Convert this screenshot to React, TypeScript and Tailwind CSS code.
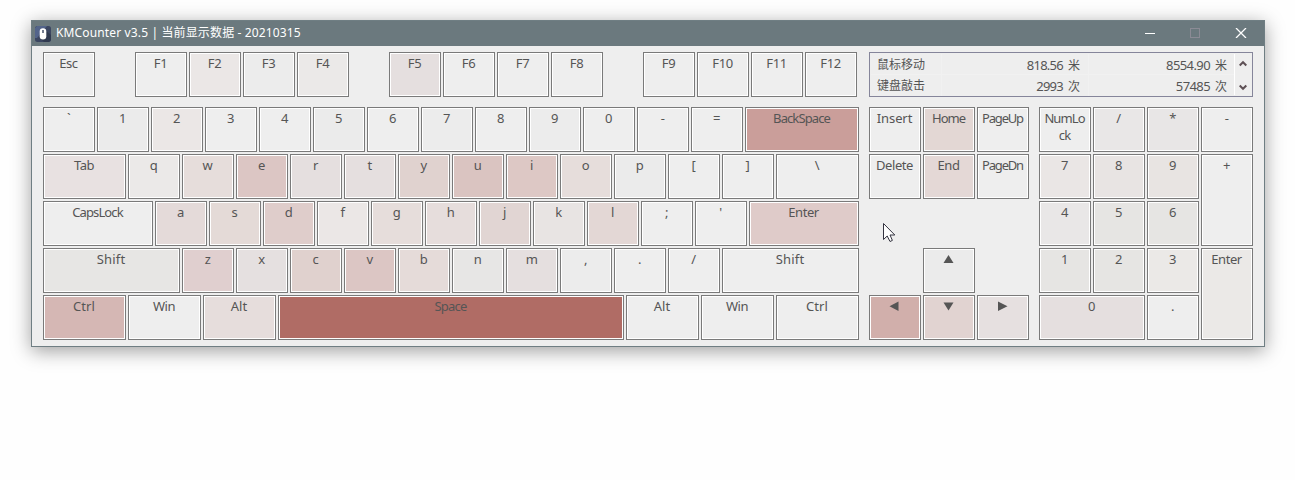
import type { ReactNode } from "react";

type KeyDef = { label: ReactNode; size?: string; fill?: string; tight?: string };

const PLAIN = "bg-[#eeeeee]";
const UNIT = "w-[52px]";

function Key({ label, size = UNIT, fill = PLAIN, tight = "" }: KeyDef) {
  return (
    <div
      className={`min-h-[45px] shrink-0 border border-[#7a7a7a] bg-white p-px ${size}`}
    >
      <div
        className={`h-full pt-px pr-[3px] pl-0.5 text-center text-[13px] leading-[17px] break-all ${fill} ${tight}`}
      >
        {label}
      </div>
    </div>
  );
}

function Row({ keys }: { keys: KeyDef[] }) {
  return (
    <div className="flex gap-0.5">
      {keys.map((k, i) => (
        <Key key={i} {...k} />
      ))}
    </div>
  );
}

function Arrow({ points }: { points: string }) {
  return (
    <svg className="mx-auto mt-[3px] block" width="11" height="11" viewBox="0 0 11 11">
      <polygon points={points} fill="#555555" />
    </svg>
  );
}

const functionGroups: KeyDef[][] = [
  [{ label: "Esc" }],
  [
    { label: "F1" },
    { label: "F2", fill: "bg-[#ebe7e6]" },
    { label: "F3", fill: "bg-[#ececec]" },
    { label: "F4", fill: "bg-[#ebe9e8]" },
  ],
  [{ label: "F5", fill: "bg-[#e5dfdf]" }, { label: "F6" }, { label: "F7" }, { label: "F8" }],
  [{ label: "F9" }, { label: "F10" }, { label: "F11" }, { label: "F12" }],
];

const mainRows: KeyDef[][] = [
  [
    { label: "`" },
    { label: "1", fill: "bg-[#ebebeb]" },
    { label: "2", fill: "bg-[#ebe7e6]" },
    { label: "3" },
    { label: "4" },
    { label: "5", fill: "bg-[#ebebeb]" },
    { label: "6" },
    { label: "7", fill: "bg-[#ececec]" },
    { label: "8" },
    { label: "9", fill: "bg-[#ececec]" },
    { label: "0" },
    { label: "-" },
    { label: "=" },
    {
      label: "BackSpace",
      size: "w-[114px]",
      fill: "bg-[#ca9e9a]",
      tight: "tracking-[-0.9px]",
    },
  ],
  [
    { label: "Tab", size: "w-[83px]", fill: "bg-[#e8e1e1]" },
    { label: "q", fill: "bg-[#ebe9e8]" },
    { label: "w", fill: "bg-[#e6dddb]" },
    { label: "e", fill: "bg-[#dcc6c4]" },
    { label: "r", fill: "bg-[#e5dfdf]" },
    { label: "t", fill: "bg-[#e5dfdf]" },
    { label: "y", fill: "bg-[#e0d2cf]" },
    { label: "u", fill: "bg-[#dac4c1]" },
    { label: "i", fill: "bg-[#ddc8c5]" },
    { label: "o", fill: "bg-[#e6dddb]" },
    { label: "p", fill: "bg-[#ebebeb]" },
    { label: "[" },
    { label: "]" },
    { label: "\\", size: "w-[83px]" },
  ],
  [
    { label: "CapsLock", size: "w-[110px]", tight: "tracking-[-0.9px]" },
    { label: "a", fill: "bg-[#e4dad9]" },
    { label: "s", fill: "bg-[#e4dad7]" },
    { label: "d", fill: "bg-[#dfcdcb]" },
    { label: "f", fill: "bg-[#ebe7e6]" },
    { label: "g", fill: "bg-[#e6dddb]" },
    { label: "h", fill: "bg-[#e6dddc]" },
    { label: "j", fill: "bg-[#e1d5d3]" },
    { label: "k", fill: "bg-[#e8e4e3]" },
    { label: "l", fill: "bg-[#e3d7d5]" },
    { label: ";" },
    { label: "'" },
    { label: "Enter", size: "w-[110px]", fill: "bg-[#dfcbc9]" },
  ],
  [
    { label: "Shift", size: "w-[137px]", fill: "bg-[#e7e6e4]", tight: "tracking-[0.2px]" },
    { label: "z", fill: "bg-[#e0cfcf]" },
    { label: "x", fill: "bg-[#e5e0e0]" },
    { label: "c", fill: "bg-[#e0d1ce]" },
    { label: "v", fill: "bg-[#dcc6c4]" },
    { label: "b", fill: "bg-[#e5dbd9]" },
    { label: "n", fill: "bg-[#e7e6e5]" },
    { label: "m", fill: "bg-[#e5dfdf]" },
    { label: ",", fill: "bg-[#ececec]" },
    { label: "." },
    { label: "/" },
    { label: "Shift", size: "w-[137px]", tight: "tracking-[0.2px]" },
  ],
  [
    { label: "Ctrl", size: "w-[83px]", fill: "bg-[#d5b7b4]", tight: "tracking-[0.1px]" },
    { label: "Win", size: "w-[73px]" },
    { label: "Alt", size: "w-[73px]", fill: "bg-[#e6dddc]", tight: "tracking-normal" },
    { label: "Space", size: "w-[346px]", fill: "bg-[#b06c65]", tight: "tracking-[-0.8px]" },
    { label: "Alt", size: "w-[73px]", tight: "tracking-normal" },
    { label: "Win", size: "w-[73px]" },
    { label: "Ctrl", size: "w-[83px]", tight: "tracking-[0.1px]" },
  ],
];

const numpad: KeyDef[] = [
  { label: "NumLock", tight: "tracking-[-0.9px]" },
  { label: "/", fill: "bg-[#e9e7e7]" },
  { label: "*", fill: "bg-[#e8e6e6]" },
  { label: "-" },
  { label: "7", fill: "bg-[#eae6e5]" },
  { label: "8", fill: "bg-[#e8e4e3]" },
  { label: "9", fill: "bg-[#e8e4e2]" },
  { label: "+", size: "w-[52px] row-span-2" },
  { label: "4", fill: "bg-[#e9e7e7]" },
  { label: "5", fill: "bg-[#e6e5e3]" },
  { label: "6", fill: "bg-[#e6e5e3]" },
  { label: "1", fill: "bg-[#e6e5e3]" },
  { label: "2", fill: "bg-[#e6e5e3]" },
  { label: "3", fill: "bg-[#ebe9e7]" },
  { label: "Enter", size: "w-[52px] row-span-2", fill: "bg-[#ebe9e7]" },
  { label: "0", size: "w-[106px] col-span-2", fill: "bg-[#e5dfdf]" },
  { label: "." },
];

const stats = [
  ["鼠标移动", "818.56", "8554.90", "米"],
  ["键盘敲击", "2993", "57485", "次"],
];

function TitleBar() {
  return (
    <header className="flex h-[25px] items-center bg-[#6b797e] pl-[3px] text-white">
      <svg width="16" height="16" viewBox="0 0 16 16" className="mr-[5px]">
        <rect width="16" height="16" rx="2.5" fill="#3b4661" />
        <path d="M2 0H12L2 12H0V2Z" fill="#53648a" />
        <path d="M9 3L16 9V14L14 16H9L5 12Z" fill="#303a50" />
        <rect x="4.7" y="2.3" width="6.6" height="11.2" rx="3.3" fill="#fff" />
        <path d="M8 4V7" stroke="#3b4661" strokeWidth="1.4" />
      </svg>
      <h1 className="pb-0.5 text-[12px] leading-4 font-normal tracking-[0.14px] whitespace-pre">
        KMCounter v3.5 | 当前显示数据 - 20210315
      </h1>
      <div className="mr-[17px] mb-px ml-auto flex gap-[35px]">
        <svg width="10" height="10" viewBox="0 0 10 10" stroke="#fff">
          <path d="M0 5.5H10" />
        </svg>
        <svg width="10" height="10" viewBox="0 0 10 10" stroke="#8b8b95" fill="none">
          <rect x=".5" y=".5" width="9" height="9" />
        </svg>
        <svg width="12" height="10" viewBox="0 0 12 10" stroke="#fff" strokeWidth="1.3">
          <path d="M1 0L11 10M11 0L1 10" />
        </svg>
      </div>
    </header>
  );
}

function StatsPanel() {
  return (
    <div className="flex h-[45px] w-[384px] border border-[#85859a] p-px text-[12px] tracking-normal">
      <div className="w-[364px] border-r border-white">
        {stats.map(([name, today, total, unit]) => (
          <div
            key={name}
            className="flex h-[21px] items-center border-b border-[#f1f1f1] leading-[22px] last:border-b-0"
          >
            <span className="h-full w-[71px] border-r border-[#f1f1f1] pl-1.5">{name}</span>
            <span className="h-full w-[147px] border-r border-[#f1f1f1] pr-2 text-right">
              <span className="text-[13px] tracking-[-0.75px]">{today}</span>
              <span className="ml-[5px]">{unit}</span>
            </span>
            <span className="h-full w-[145px] pr-[7px] text-right">
              <span className="text-[13px] tracking-[-0.6px]">{total}</span>
              <span className="ml-[5px]">{unit}</span>
            </span>
          </div>
        ))}
      </div>
      <div className="flex flex-1 flex-col items-center justify-between pt-[6px] pb-1">
        <svg width="8" height="7" viewBox="0 0 8 7" fill="none" stroke="#5e5055" strokeWidth="2">
          <path d="M.7 5.5L4 2.2L7.3 5.5" />
        </svg>
        <svg width="8" height="7" viewBox="0 0 8 7" fill="none" stroke="#5e5055" strokeWidth="2">
          <path d="M.7 1.5L4 4.8L7.3 1.5" />
        </svg>
      </div>
    </div>
  );
}

export default function App() {
  return (
    <main className="relative h-[480px] w-[1295px] overflow-hidden bg-[#fefefe] pt-5 pl-[31px] font-['Noto_Sans','Noto_Sans_CJK_SC',sans-serif] text-[#555555]">
      <section className="h-[327px] w-[1234px] border border-[#6f7e83] bg-[#eeeeee] shadow-[0_4px_18px_0_rgba(0,0,0,0.38)]">
        <TitleBar />
        <div className="flex gap-2.5 pt-1.5 pl-[11px] tracking-[-0.45px]">
          <div className="w-[816px]">
            <div className="mb-2.5 flex gap-10">
              {functionGroups.map((g, i) => (
                <Row key={i} keys={g} />
              ))}
            </div>
            <div className="flex flex-col gap-0.5">
              {mainRows.map((r, i) => (
                <Row key={i} keys={r} />
              ))}
            </div>
          </div>
          <div className="w-[384px]">
            <StatsPanel />
            <div className="mt-2.5 flex gap-2.5">
              <div className="grid grid-cols-[repeat(3,52px)] grid-rows-[repeat(5,45px)] gap-0.5">
                <Key label="Insert" tight="tracking-[-0.1px]" />
                <Key label="Home" fill="bg-[#e3d7d4]" tight="tracking-[-1px]" />
                <Key label="PageUp" tight="tracking-[-1.2px]" />
                <Key label="Delete" />
                <Key label="End" fill="bg-[#e4d8d6]" />
                <Key label="PageDn" tight="tracking-[-1.2px]" />
                <Key
                  label={<Arrow points="5.5,1 10.5,9 0.5,9" />}
                  size="w-[52px] col-start-2 row-start-4"
                  fill="bg-[#ebebeb]"
                />
                <Key
                  label={<Arrow points="9.5,0.5 9.5,10 0.5,5.2" />}
                  size="w-[52px] col-start-1 row-start-5"
                  fill="bg-[#d1afab]"
                />
                <Key
                  label={<Arrow points="0.5,1.5 10.5,1.5 5.5,9.5" />}
                  size="w-[52px] col-start-2 row-start-5"
                  fill="bg-[#e1d3d1]"
                />
                <Key
                  label={<Arrow points="1,0.5 10.5,5.2 1,10" />}
                  size="w-[52px] col-start-3 row-start-5"
                  fill="bg-[#e6e0e0]"
                />
              </div>
              <div className="grid grid-cols-[repeat(4,52px)] grid-rows-[repeat(5,45px)] gap-0.5">
                {numpad.map((k, i) => (
                  <Key key={i} {...k} />
                ))}
              </div>
            </div>
          </div>
        </div>
      </section>
      <svg
        className="absolute top-[222px] left-[883px]"
        width="13"
        height="21"
        viewBox="0 0 13 21"
      >
        <path
          d="M.5 1.5V17.5L4.2 14L7 19.5L9.4 18.4L7 13H11.8Z"
          fill="#fff"
          stroke="#33333f"
        />
      </svg>
    </main>
  );
}
